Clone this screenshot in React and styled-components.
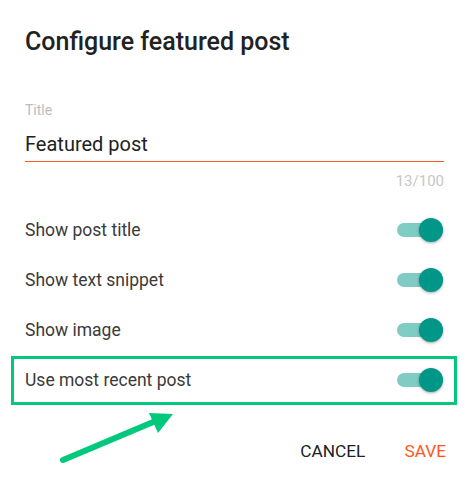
import { useState } from "react";
import styled, { createGlobalStyle } from "styled-components";

const GlobalStyle = createGlobalStyle`
  html, body {
    margin: 0;
    padding: 0;
    background: #fff;
  }
  body {
    font-family: Roboto, "Liberation Sans", Arial, sans-serif;
    -webkit-font-smoothing: antialiased;
  }
`;

const options = [
  { id: "title", label: "Show post title" },
  { id: "snippet", label: "Show text snippet" },
  { id: "image", label: "Show image" },
  { id: "recent", label: "Use most recent post", highlight: true },
];

function App() {
  const [title, setTitle] = useState("Featured post");
  const [values, setValues] = useState({
    title: true,
    snippet: true,
    image: true,
    recent: true,
  });

  const toggle = (id) => setValues((v) => ({ ...v, [id]: !v[id] }));

  return (
    <>
      <GlobalStyle />
      <Dialog>
        <Heading>Configure featured post</Heading>

        <Field>
          <Label htmlFor="post-title">Title</Label>
          <Input
            id="post-title"
            value={title}
            maxLength={100}
            onChange={(e) => setTitle(e.target.value)}
          />
          <Counter>{title.length}/100</Counter>
        </Field>

        <Options>
          {options.map((opt) => (
            <Row key={opt.id} $highlight={opt.highlight}>
              <RowLabel>{opt.label}</RowLabel>
              <Switch
                type="button"
                role="switch"
                aria-checked={values[opt.id]}
                $on={values[opt.id]}
                onClick={() => toggle(opt.id)}
              >
                <Knob $on={values[opt.id]} />
              </Switch>
            </Row>
          ))}
        </Options>

        <Footer>
          <Button>Cancel</Button>
          <Button $primary>Save</Button>
        </Footer>

        {/* annotation arrow pointing at the highlighted row */}
        <Arrow width="474" height="478" viewBox="0 0 474 478">
          <line
            x1="63"
            y1="460"
            x2="158"
            y2="420"
            stroke="#00c97d"
            strokeWidth="6"
            strokeLinecap="round"
          />
          <polygon points="173,414 149,413 158,433" fill="#00c97d" />
        </Arrow>
      </Dialog>
    </>
  );
}

const Dialog = styled.div`
  position: relative;
  width: 474px;
  height: 478px;
  box-sizing: border-box;
  padding: 26px 30px 0 25px;
`;

const Heading = styled.h2`
  margin: 0;
  font-size: 25px;
  line-height: 32px;
  font-weight: 500;
  color: #222;
`;

const Field = styled.div`
  display: flex;
  flex-direction: column;
  margin-top: 44px;
`;

const Label = styled.label`
  font-size: 14px;
  line-height: 16px;
  color: #bdbdbd;
`;

const Input = styled.input`
  margin-top: 14px;
  padding: 0 0 5px;
  border: none;
  border-bottom: 1px solid #ff5722;
  outline: none;
  font-family: inherit;
  font-size: 20px;
  line-height: 24px;
  color: #212121;
  background: transparent;
`;

const Counter = styled.div`
  align-self: flex-end;
  margin-top: 10px;
  font-size: 15px;
  line-height: 18px;
  color: #c6c6c6;
`;

const Options = styled.div`
  display: flex;
  flex-direction: column;
  margin-top: 15px;
`;

const Row = styled.div`
  position: relative;
  display: flex;
  align-items: center;
  justify-content: space-between;
  height: 50px;

  ${({ $highlight }) =>
    $highlight &&
    `
    &::after {
      content: "";
      position: absolute;
      top: 1px;
      bottom: 0;
      left: -14px;
      right: -13px;
      border: 3px solid #00c97d;
      pointer-events: none;
    }
  `}
`;

const RowLabel = styled.span`
  font-size: 17.5px;
  color: #3a3a3a;
`;

const Switch = styled.button`
  position: relative;
  display: flex;
  align-items: center;
  width: 46px;
  height: 24px;
  margin-right: 1px;
  padding: 0;
  border: none;
  background: transparent;
  cursor: pointer;

  &::before {
    content: "";
    width: 100%;
    height: 14px;
    border-radius: 7px;
    background: ${({ $on }) => ($on ? "#80cbc4" : "#bdbdbd")};
  }
`;

const Knob = styled.span`
  position: absolute;
  top: 0;
  left: ${({ $on }) => ($on ? "22px" : "0")};
  width: 24px;
  height: 24px;
  border-radius: 50%;
  background: ${({ $on }) => ($on ? "#009688" : "#f5f5f5")};
  box-shadow: 0 1px 3px rgba(0, 0, 0, 0.35);
`;

const Footer = styled.div`
  display: flex;
  justify-content: flex-end;
  gap: 23px;
  margin-top: 28px;
  margin-right: -10px;
`;

const Button = styled.button`
  height: 36px;
  padding: 0 8px;
  border: none;
  background: transparent;
  font-family: inherit;
  font-size: 17.3px;
  line-height: 36px;
  font-weight: 400;
  text-transform: uppercase;
  color: ${({ $primary }) => ($primary ? "#ff5722" : "#212121")};
  cursor: pointer;
`;

const Arrow = styled.svg`
  position: absolute;
  top: 0;
  left: 0;
  pointer-events: none;
`;

export default App;
